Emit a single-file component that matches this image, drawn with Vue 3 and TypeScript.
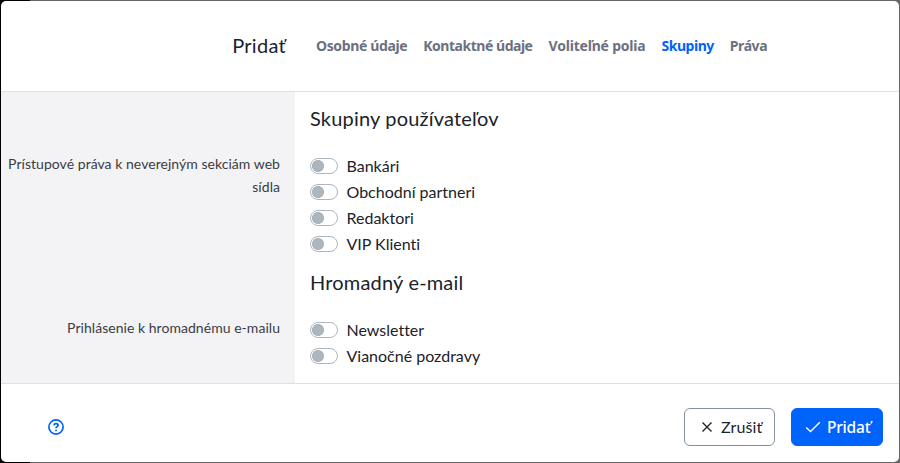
<script setup lang="ts">
interface Tab {
  name: string
  tracking: number
}

interface Section {
  title: string
  label: string
  options: string[]
}

const tabs: Tab[] = [
  { name: 'Osobné údaje', tracking: -0.37 },
  { name: 'Kontaktné údaje', tracking: -0.47 },
  { name: 'Voliteľné polia', tracking: -0.2 },
  { name: 'Skupiny', tracking: -0.48 },
  { name: 'Práva', tracking: -0.4 },
]
const active = 'Skupiny'

const sections: Section[] = [
  {
    title: 'Skupiny používateľov',
    label: 'Prístupové práva k neverejným sekciám web sídla',
    options: ['Bankári', 'Obchodní partneri', 'Redaktori', 'VIP Klienti'],
  },
  {
    title: 'Hromadný e-mail',
    label: 'Prihlásenie k hromadnému e-mailu',
    options: ['Newsletter', 'Vianočné pozdravy'],
  },
]
</script>

<template>
  <div class="backdrop">
    <div class="modal">
      <header class="header">
        <h5 class="title">Pridať</h5>
        <nav class="tabs">
          <a
            v-for="t in tabs"
            :key="t.name"
            class="tab"
            :class="{ active: t.name === active }"
            :style="{ letterSpacing: t.tracking + 'px' }"
          >{{ t.name }}</a>
        </nav>
      </header>
      <main class="body">
        <section v-for="s in sections" :key="s.title" class="section">
          <div class="label">{{ s.label }}</div>
          <div class="fields">
            <h5 class="heading">{{ s.title }}</h5>
            <label v-for="o in s.options" :key="o" class="option">
              <span class="switch"></span>
              <span class="option-text">{{ o }}</span>
            </label>
          </div>
        </section>
      </main>
      <footer class="footer">
        <svg class="help" viewBox="0 0 16 16">
          <circle cx="8" cy="8" r="7.1" />
          <path d="M5.900 6.300Q6.200 4.600 8 4.600Q10.100 4.600 10.100 6.300Q10.100 7.200 9 7.700Q8 8.200 8 9.200M8 10.700V12.300" />
        </svg>
        <div class="actions">
          <button class="btn cancel">
            <svg class="icon" viewBox="0 0 16 16"><path d="M3.500 3.500L12.500 12.500M12.500 3.500L3.500 12.500" /></svg>
            <span class="btn-text">Zrušiť</span>
          </button>
          <button class="btn primary">
            <svg class="icon" viewBox="0 0 16 16"><path d="M1.200 8.500L5.500 12.500L14.800 3.200" /></svg>
            <span class="btn-text">Pridať</span>
          </button>
        </div>
      </footer>
    </div>
  </div>
</template>

<style>
body {
  background: #666;
}
</style>

<style scoped>
.backdrop {
  box-sizing: border-box;
  height: 463px;
  padding: 1px;
  background: linear-gradient(90deg, #000 30px, #666 30px);
  font-family: Lato, "Noto Sans", sans-serif;
  font-variant-ligatures: none;
  color: #20222a;
}
.modal {
  box-sizing: border-box;
  height: 461px;
  display: flex;
  flex-direction: column;
  background: #fff;
  border-radius: 5px;
  overflow: hidden;
}
.header {
  box-sizing: border-box;
  height: 91px;
  display: flex;
  align-items: center;
  padding-bottom: 2px;
  border-bottom: 1px solid #dee0e6;
}
.title {
  width: 285px;
  margin: 0 30px 0 0;
  text-align: right;
  font-size: 20px;
  font-weight: 400;
  letter-spacing: 0.3px;
}
.tabs {
  display: flex;
  gap: 16px;
}
.tab {
  font-family: "Noto Sans", sans-serif;
  font-size: 14px;
  font-weight: 700;
  color: #6c7080;
}
.tab.active {
  color: #0063fb;
}
.body {
  height: 291px;
  display: flex;
  flex-direction: column;
}
.section {
  display: flex;
  height: 164px;
}
.section:last-child {
  height: auto;
  flex: 1;
}
.label {
  width: 294px;
  box-sizing: border-box;
  background: #f3f3f6;
  padding: 60px 15px 0 0;
  text-align: right;
  font-size: 14px;
  line-height: 23px;
  letter-spacing: 0.04px;
  color: #3a3c45;
}
.fields {
  padding-left: 15px;
}
.heading {
  margin: 0;
  font-size: 20px;
  font-weight: 400;
  height: 61px;
  line-height: 52px;
  letter-spacing: 0.18px;
}
.option {
  display: flex;
  align-items: center;
  height: 26px;
  font-size: 16px;
}
.option-text {
  padding-bottom: 2px;
}
.switch {
  width: 28px;
  height: 16px;
  box-sizing: border-box;
  border: 1px solid #adb5bd;
  border-radius: 8px;
  margin-right: 8.500px;
  background: radial-gradient(circle at 7px 7px, #adb5bd 5.7px, transparent 6.3px);
}
.footer {
  flex: 1;
  display: flex;
  border-top: 1px solid #dee0e6;
  align-items: center;
  justify-content: space-between;
  padding: 8px 16px 0 47px;
}
.help {
  width: 16px;
  height: 16px;
  fill: none;
  stroke: #0063fb;
  stroke-width: 1.7;
}
.actions {
  display: flex;
  gap: 16px;
}
.btn {
  height: 38px;
  width: 91px;
  border: 1px solid #868ea5;
  border-radius: 6px;
  background: #fff;
  color: #20222a;
  font: inherit;
  font-size: 16px;
  letter-spacing: 0.1px;
  display: flex;
  align-items: center;
  padding: 0 0 0 14px;
}
.btn-text {
  padding-bottom: 2px;
}
.btn.primary {
  width: 92px;
  background: #0063fb;
  border-color: #0063fb;
  color: #fff;
  font-family: "Noto Sans", sans-serif;
  font-size: 15.500px;
  font-weight: 500;
  letter-spacing: -0.2px;
}
.primary .btn-text {
  padding-bottom: 0;
}
.icon {
  width: 16px;
  height: 16px;
  fill: none;
  stroke: currentColor;
  stroke-width: 1.4;
  margin-right: 6px;
}
.primary .icon {
  margin-left: -1px;
}
</style>
